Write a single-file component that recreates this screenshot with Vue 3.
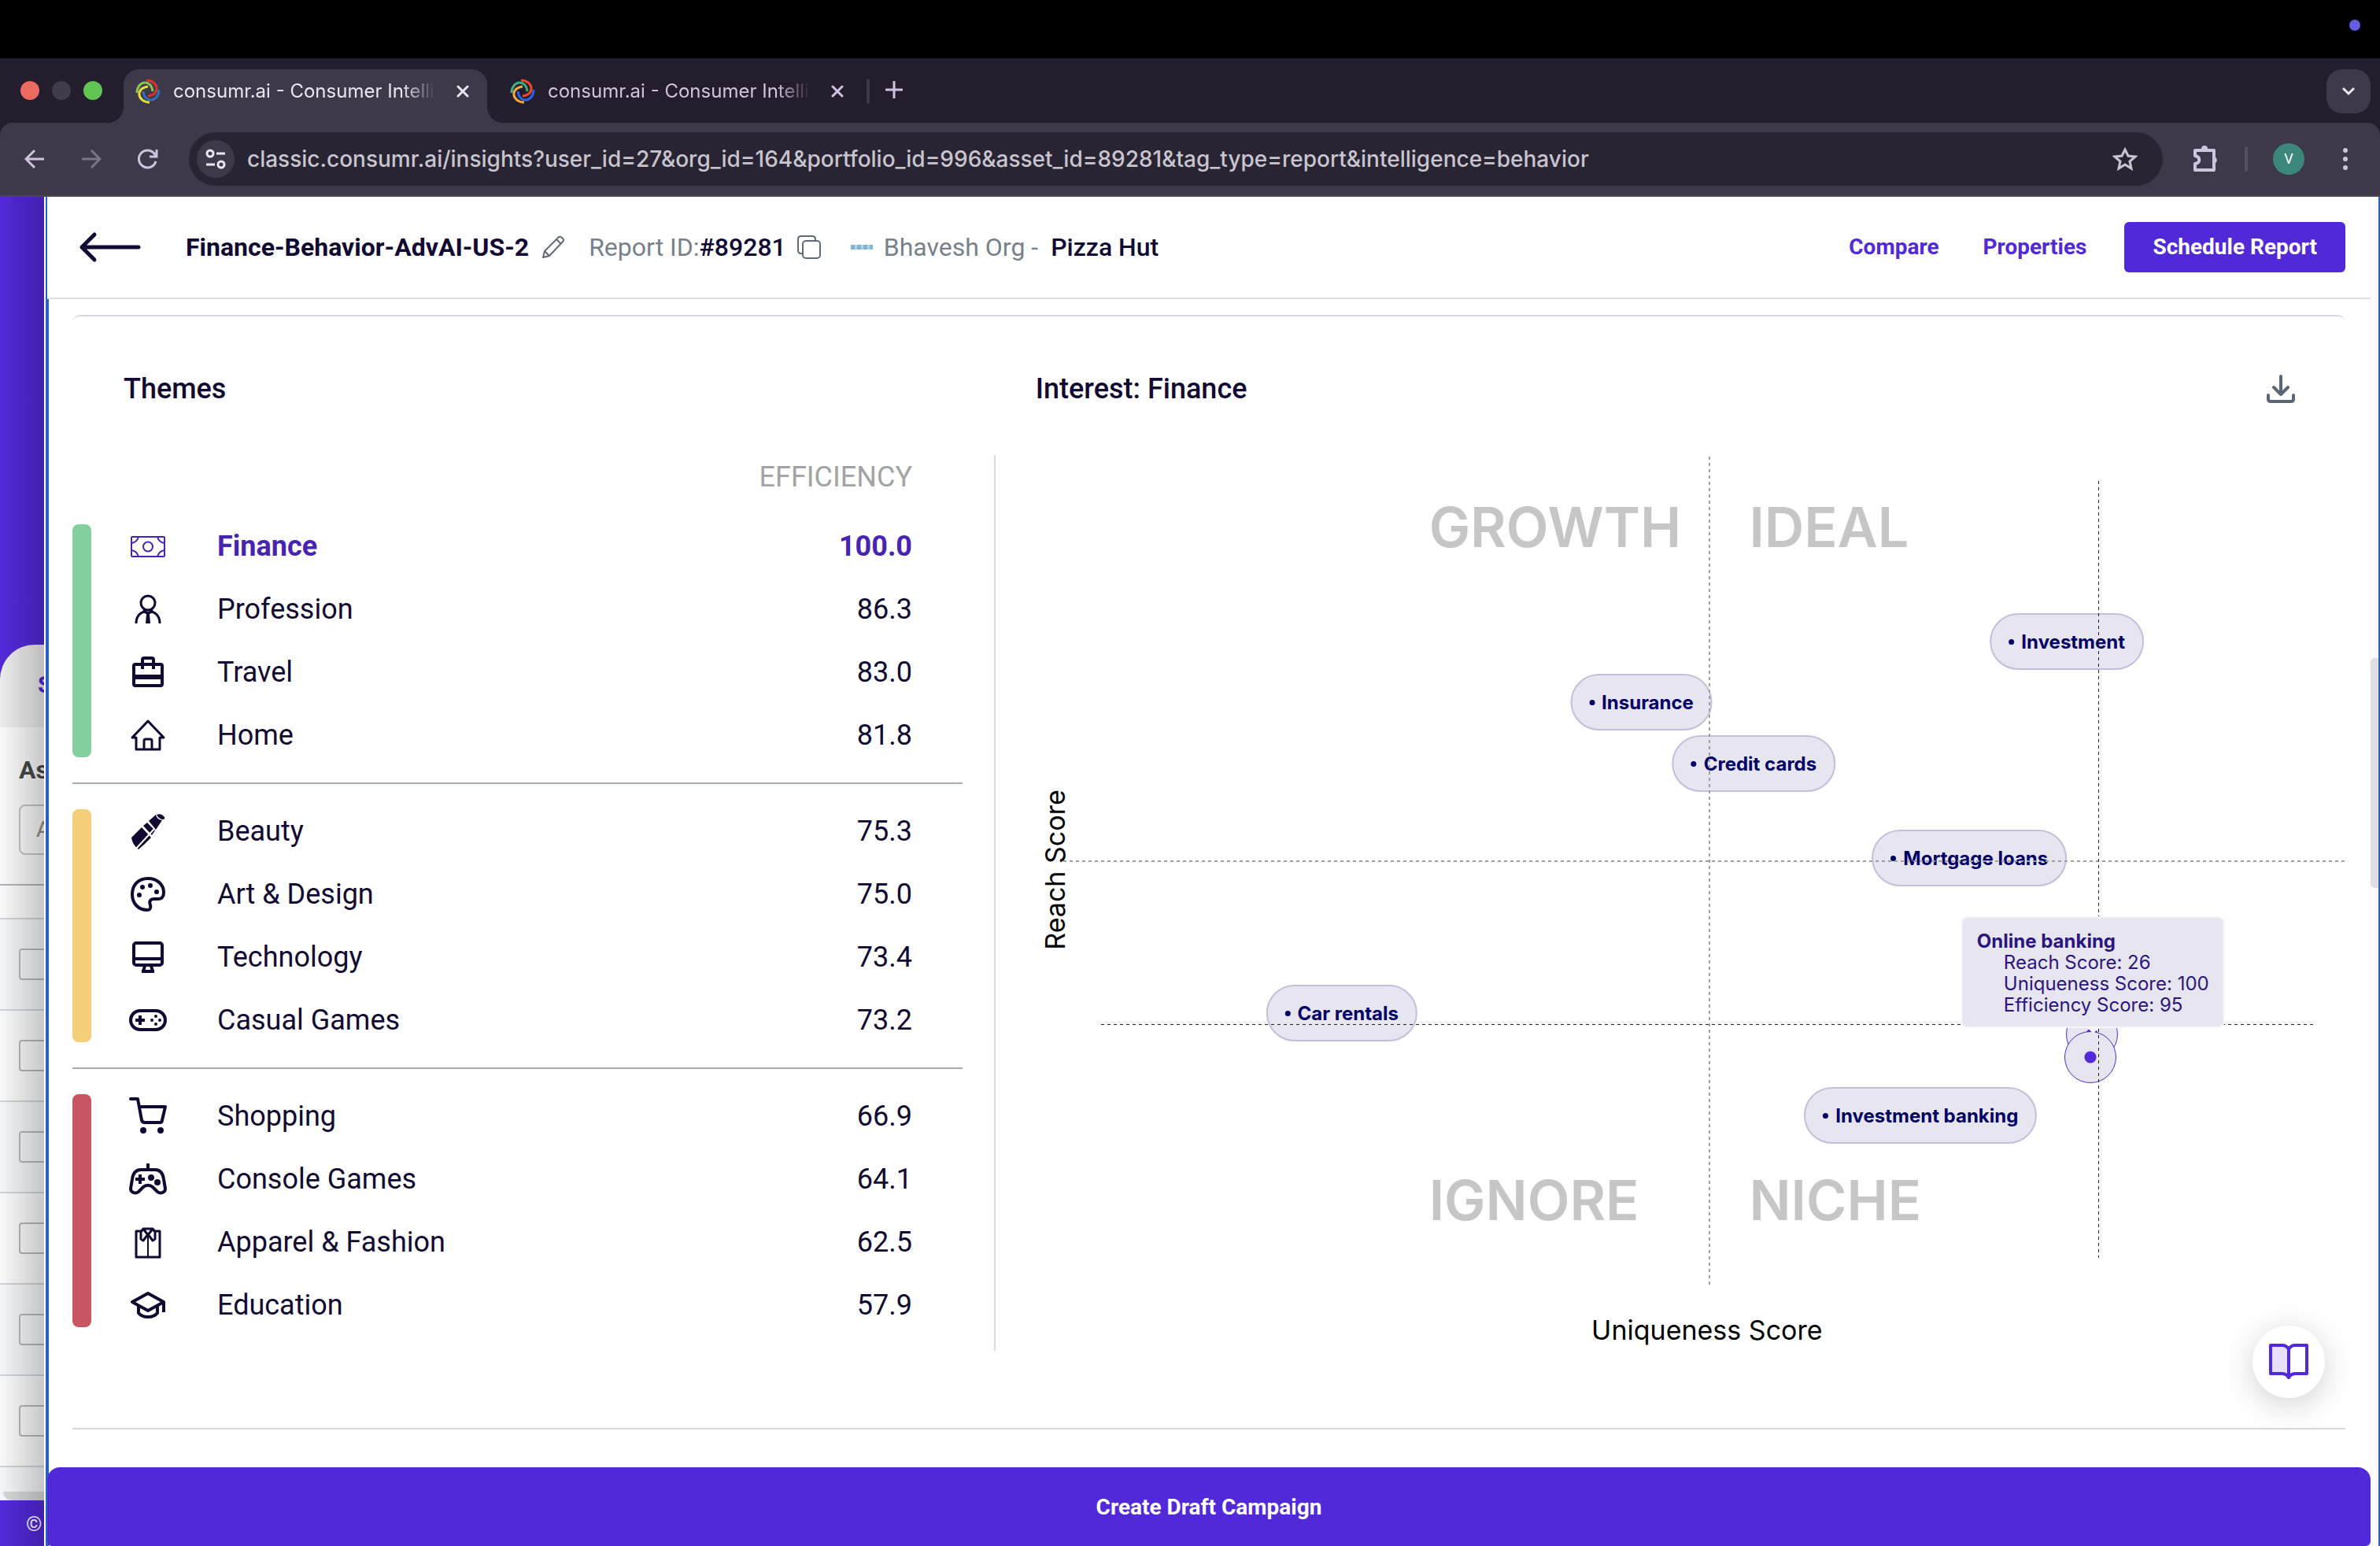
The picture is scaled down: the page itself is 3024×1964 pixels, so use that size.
<script setup>
import { ref } from 'vue'

const url = ref('classic.consumr.ai/insights?user_id=27&org_id=164&portfolio_id=996&asset_id=89281&tag_type=report&intelligence=behavior')

const tabs = [
  { title: 'consumr.ai - Consumer Intelligence', active: true, colors: ['#8cc152', '#d8342c', '#2f6fbd', '#e3df3a'] },
  { title: 'consumr.ai - Consumer Intelligence', active: false, colors: ['#3fae7c', '#ea4a2c', '#2563eb', '#f5a83a'] },
]

const icons = {
  finance: '<g fill="none" stroke="currentColor" stroke-width="2"><rect x="3" y="12" width="42" height="25" rx="1"/><ellipse cx="24" cy="24.500" rx="6" ry="6"/><path d="M12 12q-2 7-9 8M36 12q2 7 9 8M12 37q-2-7-9-8M36 37q2-7 9-8"/></g>',
  profession: '<g fill="none" stroke="currentColor" stroke-width="3"><circle cx="24" cy="16" r="9"/><path d="M9 42c0-9 5-14 11-15M39 42c0-9-5-14-11-15"/></g><path fill="currentColor" d="M18 24l6 3 6-3 1 4-5 2 1 12h-6l1-12-5-2z"/>',
  travel: '<g fill="none" stroke="currentColor" stroke-width="4"><rect x="6" y="14" width="36" height="27" rx="2"/><path d="M17 20V8q0-2 2-2h10q2 0 2 2v12"/></g><path fill="currentColor" d="M5 27h38v6H5z"/>',
  home: '<g fill="none" stroke="currentColor" stroke-width="3" stroke-linejoin="round"><path d="M4 27 24 6l20 21h-5v15H9V27z"/><path d="M19 42V31q0-2 2-2h6q2 0 2 2v11"/></g>',
  beauty: '<path fill="currentColor" d="M3 32 16 19l12 13-8 8-8 7Q4 41 3 32zM18 17l5-4 10 10-4 6zM25 11l9-8q1 6 8 7l-8 12zM35 3q5-2 8 1 4 3 1 5-6 0-9-6z"/><path stroke="#fff" stroke-width="2" d="M9 46 32 21"/>',
  art: '<path fill="none" stroke="currentColor" stroke-width="4" stroke-linejoin="round" d="M24 4C12 4 4 12 4 24s8 20 19 20c4 0 5-3 4-6-2-5 0-8 5-8h5c5 0 7-4 7-8C44 11 35 4 24 4z"/><g fill="currentColor"><circle cx="13" cy="25" r="3"/><circle cx="17" cy="15" r="3"/><circle cx="27" cy="13" r="3"/><circle cx="35" cy="21" r="3"/></g>',
  technology: '<g fill="none" stroke="currentColor" stroke-width="4" stroke-linejoin="round"><rect x="6" y="6" width="36" height="28" rx="3"/><path d="M6 26h36M20 35l-2 7h12l-2-7M16 42h16"/></g>',
  casual: '<rect x="2" y="12" width="44" height="24" rx="12" fill="none" stroke="currentColor" stroke-width="4"/><path stroke="currentColor" stroke-width="4" d="M8 24h12M14 18v12"/><g fill="currentColor"><circle cx="34" cy="19" r="2"/><circle cx="34" cy="29" r="2"/><circle cx="29" cy="24" r="2"/><circle cx="39" cy="24" r="2"/></g>',
  shopping: '<path fill="none" stroke="currentColor" stroke-width="4" stroke-linecap="round" stroke-linejoin="round" d="M2 2h9l5 27q1 3 4 3h19q3 0 3-3l4-17H13"/><circle cx="18" cy="42" r="4" fill="currentColor"/><circle cx="40" cy="42" r="4" fill="currentColor"/>',
  console: '<path fill="none" stroke="currentColor" stroke-width="4" stroke-linejoin="round" d="M15 12h18c7 0 10 5 11 12l2 12c0 5-6 7-10 4l-6-6c-3-3-9-3-12 0l-6 6c-4 3-10 1-10-4l2-12c1-7 4-12 11-12zM24 12V4"/><path stroke="currentColor" stroke-width="4" d="M8 24h12M14 18v12"/><circle cx="28" cy="22" r="4" fill="currentColor"/><circle cx="36" cy="28" r="4" fill="currentColor"/>',
  apparel: '<g fill="none" stroke="currentColor" stroke-width="3" stroke-linejoin="round"><path d="M16 10H9v33h30V10h-7"/><path d="M18 7h12l3 4v9l-3 2-6-8-6 8-3-2v-9zM18 7l6 8 6-8"/><path stroke-width="2" d="M24 15v28"/></g>',
  education: '<g fill="none" stroke="currentColor" stroke-width="4" stroke-linejoin="round"><path d="M4 20 24 9l20 11-20 11z"/><path d="M12 25v9q4 5 12 5t12-5v-9M44 20v13"/></g>',
}

const groups = [
  {
    tone: 'high',
    rows: [
      { name: 'Finance', icon: 'finance', value: '100.0', selected: true },
      { name: 'Profession', icon: 'profession', value: '86.3' },
      { name: 'Travel', icon: 'travel', value: '83.0' },
      { name: 'Home', icon: 'home', value: '81.8' },
    ],
  },
  {
    tone: 'medium',
    rows: [
      { name: 'Beauty', icon: 'beauty', value: '75.3' },
      { name: 'Art & Design', icon: 'art', value: '75.0' },
      { name: 'Technology', icon: 'technology', value: '73.4' },
      { name: 'Casual Games', icon: 'casual', value: '73.2' },
    ],
  },
  {
    tone: 'low',
    rows: [
      { name: 'Shopping', icon: 'shopping', value: '66.9' },
      { name: 'Console Games', icon: 'console', value: '64.1' },
      { name: 'Apparel & Fashion', icon: 'apparel', value: '62.5' },
      { name: 'Education', icon: 'education', value: '57.9' },
    ],
  },
]

/* Chart coordinates, in units of a 1716 x 1138 plot */
const PLOT_W = 1716
const PLOT_H = 1138
const at = (x, y) => ({ left: (x / PLOT_W) * 100 + '%', top: (y / PLOT_H) * 100 + '%' })

const points = [
  { name: 'Investment', x: 1362, y: 237 },
  { name: 'Insurance', x: 821, y: 314 },
  { name: 'Credit cards', x: 964, y: 392 },
  { name: 'Mortgage loans', x: 1238, y: 512 },
  { name: 'Car rentals', x: 440, y: 709 },
  { name: 'Investment banking', x: 1176, y: 839 },
]
const dots = [
  { x: 1394, y: 736 },
  { x: 1392, y: 765 },
]
const quadrants = [
  { name: 'GROWTH', x: 551, y: 92 },
  { name: 'IDEAL', x: 958, y: 92 },
  { name: 'IGNORE', x: 551, y: 947 },
  { name: 'NICHE', x: 958, y: 947 },
]
</script>

<template>
  <div class="screen">
    <div class="menubar"><span class="indicator"></span></div>

    <div class="tabstrip">
      <div class="lights"><i class="red"></i><i class="grey"></i><i class="green"></i></div>
      <div v-for="(tab, i) in tabs" :key="i" class="tab" :class="{ active: tab.active }">
        <svg class="favicon" viewBox="0 0 32 32" fill="none" stroke-width="3">
          <path
            v-for="(color, n) in tab.colors"
            :key="color"
            :stroke="color"
            :transform="`rotate(${n * 90} 16 16)`"
            d="M2 18C2 3 20-1 22 16"
          />
        </svg>
        <span class="tab-title">{{ tab.title }}</span>
        <button class="icon-btn" aria-label="Close tab">
          <svg width="16" height="16" viewBox="0 0 16 16" stroke="currentColor" stroke-width="3" stroke-linecap="round"><path d="M2 2l12 12M14 2 2 14" /></svg>
        </button>
      </div>
      <span class="tab-sep"></span>
      <button class="icon-btn new-tab" aria-label="New tab">
        <svg width="22" height="22" viewBox="0 0 22 22" stroke="currentColor" stroke-width="3" stroke-linecap="round"><path d="M11 1v20M1 11h20" /></svg>
      </button>
      <button class="tab-search" aria-label="Search tabs">
        <svg width="18" height="12" viewBox="0 0 18 12" fill="none" stroke="currentColor" stroke-width="3"><path d="M2 2l7 7 7-7" /></svg>
      </button>
    </div>

    <div class="toolbar-bg">
      <div class="toolbar">
        <div class="nav">
          <button class="icon-btn" aria-label="Back">
            <svg width="26" height="26" viewBox="0 0 26 26" fill="none" stroke="currentColor" stroke-width="3"><path d="M13 2 2 13l11 11M2 13h23" /></svg>
          </button>
          <button class="icon-btn dim" aria-label="Forward">
            <svg width="26" height="26" viewBox="0 0 26 26" fill="none" stroke="currentColor" stroke-width="3"><path d="m13 2 11 11-11 11M24 13H1" /></svg>
          </button>
          <button class="icon-btn" aria-label="Reload">
            <svg width="26" height="26" viewBox="0 0 26 26" fill="none" stroke="currentColor" stroke-width="3"><path d="M23 16A11 11 0 1 1 21 6l3 4M24 1v9h-9" /></svg>
          </button>
        </div>
        <div class="omnibox">
          <button class="site-info" aria-label="Site information">
            <svg width="26" height="26" viewBox="0 0 26 26" fill="none" stroke="currentColor" stroke-width="3"><circle cx="6" cy="6" r="4" /><path d="M14 6h11M1 20h11" /><circle cx="20" cy="20" r="4" /></svg>
          </button>
          <input v-model="url" class="url" type="text" aria-label="Address" />
          <button class="icon-btn star" aria-label="Bookmark">
            <svg width="32" height="32" viewBox="0 0 32 32" fill="none" stroke="currentColor" stroke-width="3"><path d="m16 4 4 8 9 1-7 6 2 9-8-5-8 5 2-9-7-6 9-1z" /></svg>
          </button>
        </div>
        <button class="icon-btn puzzle" aria-label="Extensions">
          <svg width="34" height="36" viewBox="0 0 34 36" fill="none" stroke="currentColor" stroke-width="4" stroke-linejoin="round"><path d="M3 7h24v25H3v-8c7-1 7-9 0-10z" /><path fill="currentColor" stroke="none" d="M11 5a4 4 0 0 1 8 0zM28 15a5 5 0 0 1 0 9z" /></svg>
        </button>
        <span class="bar-sep"></span>
        <button class="avatar">V</button>
        <button class="icon-btn kebab" aria-label="Menu">
          <svg width="8" height="28" viewBox="0 0 8 28" fill="currentColor"><circle cx="4" cy="3" r="3" /><circle cx="4" cy="14" r="3" /><circle cx="4" cy="25" r="3" /></svg>
        </button>
      </div>
    </div>

    <div class="page">
      <aside class="behind">
        <div class="behind-tab"><span>Saved</span></div>
        <div class="behind-card">
          <strong>Asset</strong>
          <div class="behind-input">All</div>
        </div>
        <div class="behind-rows">
          <div class="behind-row head"></div>
          <div v-for="n in 6" :key="n" class="behind-row"><input type="checkbox" :aria-label="'Select asset ' + n" /></div>
          <div class="behind-row last"><span class="behind-scroll"></span></div>
        </div>
        <div class="behind-footer">©</div>
      </aside>

      <section class="panel">
        <header class="header">
          <button class="icon-btn back" aria-label="Back to reports">
            <svg width="80" height="40" viewBox="0 0 80 40" fill="none" stroke="currentColor" stroke-width="5" stroke-linecap="round" stroke-linejoin="round"><path d="M20 4 4 20l16 16M4 20h72" /></svg>
          </button>
          <h1>Finance-Behavior-AdvAI-US-2</h1>
          <button class="icon-btn pencil" aria-label="Rename">
            <svg width="30" height="30" viewBox="0 0 30 30" fill="none" stroke="currentColor" stroke-width="2" stroke-linejoin="round"><path d="m2 28 2-8L22 2q2-1 4 1l1 1q2 2 0 4L10 26zM19 5l6 6M4 20l6 6" /></svg>
          </button>
          <p class="muted">Report ID:<b>#89281</b></p>
          <button class="icon-btn copy" aria-label="Copy report ID">
            <svg width="30" height="30" viewBox="0 0 30 30" fill="none" stroke="currentColor" stroke-width="2"><rect x="7" y="7" width="22" height="22" rx="4" /><path d="M7 23H5q-4 0-4-4V5q0-4 4-4h14q4 0 4 4v2" /></svg>
          </button>
          <span class="org-logo"></span>
          <p class="muted">Bhavesh Org -</p>
          <p class="brand">Pizza Hut</p>
          <nav class="actions">
            <a href="#compare">Compare</a>
            <a href="#properties">Properties</a>
            <button class="primary">Schedule Report</button>
          </nav>
        </header>

        <main class="content">
          <article class="card">
            <div class="card-head">
              <h2 class="themes-title">Themes</h2>
              <h2 class="chart-title">Interest: Finance</h2>
              <button class="icon-btn download" aria-label="Download">
                <svg width="36" height="36" viewBox="0 0 36 36" fill="none" stroke="currentColor" stroke-width="4" stroke-linecap="round" stroke-linejoin="round"><path d="M18 2v22M9 16l9 9 9-9M2 26v5q0 3 3 3h26q3 0 3-3v-5" /></svg>
              </button>
            </div>

            <div class="card-body">
              <div class="themes">
                <table>
                  <thead>
                    <tr><th class="eff" colspan="4">EFFICIENCY</th></tr>
                  </thead>
                  <tbody v-for="(g, gi) in groups" :key="g.tone">
                    <tr v-for="(row, ri) in g.rows" :key="row.name" class="theme" :class="{ selected: row.selected }">
                      <td v-if="ri === 0" rowspan="4" class="tone"><div class="tone-bar" :class="g.tone"></div></td>
                      <td class="icon"><svg width="48" height="48" viewBox="0 0 48 48" v-html="icons[row.icon]"></svg></td>
                      <td class="name">{{ row.name }}</td>
                      <td class="value">{{ row.value }}</td>
                    </tr>
                    <tr v-if="gi < 2"><td colspan="4" class="rule"><hr /></td></tr>
                  </tbody>
                </table>
              </div>

              <div class="chart">
                <span v-for="q in quadrants" :key="q.name" class="quadrant" :style="at(q.x, q.y)">{{ q.name }}</span>
                <span v-for="p in points" :key="p.name" class="pill" :style="at(p.x, p.y)"><i></i>{{ p.name }}</span>
                <span v-for="d in dots" :key="d.y" class="dot" :style="at(d.x, d.y)"></span>
                <span class="line mid-h"></span>
                <span class="line mid-v"></span>
                <span class="line cross-h"></span>
                <span class="line cross-v"></span>
                <span class="axis axis-y">Reach Score</span>
                <span class="axis axis-x">Uniqueness Score</span>
                <div class="tooltip" role="tooltip">
                  <b>Online banking</b>
                  <span>Reach Score: 26</span>
                  <span>Uniqueness Score: 100</span>
                  <span>Efficiency Score: 95</span>
                </div>
              </div>
            </div>
          </article>
        </main>

        <button class="create">Create Draft Campaign</button>
        <span class="scroll-thumb"></span>
        <button class="guide" aria-label="Open guide">
          <svg width="52" height="48" viewBox="0 0 52 48" stroke="#5229d9" stroke-width="4" stroke-linejoin="round"><path fill="#e6e0fa" d="M26 8q-3-5-8-5H3v36h14q6 0 9 5z" /><path fill="none" d="M26 8q3-5 8-5h15v36H35q-6 0-9 5z" /></svg>
        </button>
      </section>
    </div>
  </div>
</template>

<style>
body { margin: 0; }
</style>

<style scoped>
.screen {
  display: flex;
  flex-direction: column;
  min-height: 100vh;
  background: #000;
  color: #120a33;
  font-family: Roboto, "Liberation Sans", sans-serif;
}
.screen *, .screen *::before, .screen *::after { box-sizing: border-box; }
h1, h2, p { margin: 0; }
button { font: inherit; color: inherit; border: 0; cursor: pointer; }
.icon-btn { display: flex; align-items: center; justify-content: center; padding: 0; background: none; }
.icon-btn svg { display: block; }

/* Browser frame */
.menubar { display: flex; justify-content: flex-end; align-items: center; height: 74px; padding: 0 25px 10px; }
.indicator { width: 14px; height: 14px; border-radius: 50%; background: #655ce8; }
.tabstrip {
  display: flex;
  align-items: flex-end;
  height: 82px;
  background: #241d2e;
  color: #cfc4de;
  font: 500 24px/32px Inter, sans-serif;
}
.lights { display: flex; gap: 16px; height: 68px; width: 157px; padding: 15px 0 0 26px; }
.lights i { width: 24px; height: 24px; border-radius: 50%; }
.red { background: #ec6a5e; }
.grey { background: #413b4b; }
.green { background: #61c554; }
.tab { position: relative; display: flex; align-items: center; width: 462px; height: 68px; padding: 0 23px 12px 15px; }
.tab + .tab { width: 476px; padding-left: 29px; }
.tab.active { background: #3e394a; color: #e9e6ee; border-radius: 20px 20px 0 0; }
.tab.active::before, .tab.active::after {
  content: "";
  position: absolute;
  bottom: 0;
  width: 20px;
  height: 20px;
}
.tab.active::before { left: -20px; background: radial-gradient(circle at 0 0, transparent 20px, #3e394a 20px); }
.tab.active::after { right: -20px; background: radial-gradient(circle at 100% 0, transparent 20px, #3e394a 20px); }
.favicon { width: 32px; height: 32px; }
.tab-title {
  flex: 1;
  min-width: 0;
  margin: 0 26px 0 16px;
  overflow: hidden;
  white-space: nowrap;
  font-weight: 400;
  -webkit-mask-image: linear-gradient(to right, #000 87%, transparent);
  mask-image: linear-gradient(to right, #000 87%, transparent);
}
.tab-sep { width: 4px; height: 32px; margin: 0 20px 24px 6px; background: #3e394a; border-radius: 2px; }
.new-tab { height: 32px; margin-bottom: 26px; }
.tab-search {
  display: flex;
  align-items: center;
  justify-content: center;
  width: 56px;
  height: 56px;
  margin: 0 12px 12px auto;
  padding: 0;
  border-radius: 20px;
  background: #3e394a;
  color: #e9e6ee;
}
.toolbar-bg { background: #241d2e; }
.toolbar {
  display: flex;
  align-items: center;
  height: 94px;
  padding: 0 40px 0 31px;
  border-bottom: 2px solid #4a474e;
  border-radius: 16px 16px 0 0;
  background: #3e394a;
  color: #cfc4de;
}
.nav { display: flex; gap: 46px; margin-right: 39px; }
.dim { color: #7b7486; }
.omnibox { display: flex; align-items: center; flex: 1; height: 68px; padding: 0 32px 0 10px; border-radius: 34px; background: #282433; }
.site-info { display: flex; align-items: center; justify-content: center; width: 48px; height: 48px; padding: 0; border-radius: 50%; background: #3e394a; color: #e9e6ee; }
.url { flex: 1; min-width: 0; margin: 0 16px; padding: 0; border: 0; outline: 0; background: none; color: #c9c5ce; font: 500 28px/36px Inter, sans-serif; }
.star { color: #c9c5ce; }
.puzzle { margin-left: 38px; }
.bar-sep { width: 4px; height: 32px; margin: 0 32px; border-radius: 2px; background: #554f60; }
.avatar { width: 40px; height: 40px; padding: 0; border-radius: 50%; background: #3b877b; color: #fff; font-size: 18px; line-height: 40px; }
.kebab { margin-left: 48px; }

/* Page hidden behind the panel */
.page { display: flex; flex: 1; background: #fff; }
.behind { position: relative; display: flex; flex-direction: column; width: 56px; margin-right: 2px; overflow: hidden; background: #5229d9; }
.behind::after { content: ""; position: absolute; inset: 0; background: linear-gradient(to right, transparent, rgba(0, 0, 0, 0.2)); }
.behind-tab { height: 105px; margin-top: 569px; padding: 33px 0 0 48px; border-radius: 44px 0 0 0; background: #ececec; color: #5229d9; font-size: 30px; font-weight: 700; }
.behind-card { height: 201px; padding: 34px 0 0 24px; border-bottom: 2px solid #b0b4b8; background: #fafafa; color: #484848; font-size: 32px; line-height: 40px; }
.behind-input { width: 400px; height: 64px; margin-top: 24px; padding: 10px 20px; border: 2px solid #c4c4c4; border-radius: 8px; color: #8c8c8c; font-size: 28px; }
.behind-row { display: flex; align-items: center; height: 116px; padding-left: 24px; border-bottom: 2px solid #d0d4d8; background: #fafafa; }
.behind-row:nth-child(even) { background: #f4f6f9; }
.behind-row.head { height: 43px; }
.behind-row.last { height: 42px; padding: 30px 0 0 4px; border: 0; }
.behind-row input { flex: none; appearance: none; width: 40px; height: 40px; margin: 0; border: 2px solid #b8b8b8; border-radius: 4px; }
.behind-scroll { width: 52px; height: 11px; border-radius: 0 0 0 11px; background: #d8d8d8; }
.behind-footer { flex: 1; padding: 14px 0 0 33px; color: #fff; font-size: 26px; line-height: 32px; }

/* Report panel */
.panel { position: relative; display: flex; flex: 1; flex-direction: column; min-width: 0; border-left: 4px solid #2a5fc9; border-right: 2px solid #2a5fc9; background: #fff; }
.header {
  display: flex;
  align-items: center;
  height: 130px;
  margin: 0 10px 0 -2px;
  padding: 0 32px 0 40px;
  border-bottom: 2px solid #dededf;
  background: #fff;
  font-size: 32px;
  line-height: 40px;
}
.header h1 { margin-left: 56px; font-size: 32px; font-weight: 700; }
.pencil { margin: 0 30px 0 16px; color: #5f6b78; }
.muted { color: #77818c; }
.muted b { color: #120a33; font-weight: 500; }
.copy { margin: 0 38px 0 14px; color: #5f6b78; }
.org-logo { width: 28px; height: 6px; margin-right: 14px; background: repeating-linear-gradient(to right, #7fb4d8 0 5px, #b9d3dc 5px 8px); }
.brand { margin-left: 16px; font-weight: 500; }
.actions { display: flex; align-items: center; gap: 56px; margin-left: auto; font-size: 28px; font-weight: 700; color: #5229d9; }
.actions a { color: inherit; text-decoration: none; }
.primary { height: 64px; margin-left: -8px; padding: 0 36px; border-radius: 6px; background: #5229d9; color: #fff; }
.content { flex: 1; padding: 20px 42px 0 30px; }
.card { padding-bottom: 98px; border: solid #d6d6dc; border-width: 2px 0; border-radius: 10px 10px 0 0; }
.card-head { display: flex; align-items: center; height: 176px; padding: 8px 64px 0 65px; }
.card-head h2 { font-size: 36px; font-weight: 500; line-height: 44px; }
.themes-title { width: 42%; }
.download { margin-left: auto; color: #5a6672; }
.card-body { display: grid; grid-template-columns: 1173fr 1715fr; }
.themes { padding: 0 40px 18px 0; border-right: 2px solid #dcdcde; }
table { width: 100%; border-collapse: collapse; font-size: 36px; line-height: 44px; }
th, td { padding: 0; }
.eff { height: 76px; padding: 0 64px 20px 0; color: #a3a3a3; font-weight: 400; text-align: right; }
.theme { height: 80px; }
.tone { width: 72px; }
.tone-bar { width: 24px; height: 296px; border-radius: 8px; }
.high { background: #82d09e; }
.medium { background: #f4ce79; }
.low { background: #c85562; }
.icon { width: 112px; }
.icon svg { display: block; overflow: visible; }
.value { padding-right: 64px; text-align: right; }
.selected { color: #4724b4; font-weight: 700; }
.rule { height: 42px; }
.rule hr { height: 2px; margin: 0; border: 0; background: #a8adb5; }

/* Quadrant chart */
.chart { position: relative; font-family: Inter, "Liberation Sans", sans-serif; }
.quadrant { position: absolute; transform: translateY(-50%); color: #c6c6c6; font-size: 70px; font-weight: 600; line-height: 80px; }
.pill {
  position: absolute;
  display: flex;
  align-items: center;
  gap: 9px;
  height: 72px;
  padding: 0 22px;
  border: 2px solid #c3bfdb;
  border-radius: 36px;
  background: #e7e5ef;
  color: #000066;
  font-size: 24px;
  font-weight: 700;
  white-space: nowrap;
  transform: translate(-50%, -50%);
}
.pill i { width: 7px; height: 7px; border-radius: 50%; background: #000066; }
.dot { position: absolute; width: 66px; height: 66px; border: 1px solid #5229d9; border-radius: 50%; background: radial-gradient(circle, #5229d9 7px, #e7e5ef 8px); transform: translate(-50%, -50%); }
.line { position: absolute; }
.mid-h { top: 515px; left: 5%; right: 0; height: 2px; background: repeating-linear-gradient(to right, #a0a0a0 0 4px, transparent 4px 8px); }
.mid-v { left: 52.8%; top: 2px; bottom: 84px; width: 2px; background: repeating-linear-gradient(to bottom, #a0a0a0 0 4px, transparent 4px 8px); }
.cross-h { top: 723px; left: 7.8%; right: 40px; height: 1px; background: repeating-linear-gradient(to right, #222 0 4px, transparent 4px 8px); }
.cross-v { left: 81.7%; top: 33px; bottom: 118px; width: 1px; background: repeating-linear-gradient(to bottom, #222 0 4px, transparent 4px 8px); }
.axis { position: absolute; color: #000; font-size: 34px; line-height: 44px; white-space: nowrap; }
.axis-x { left: 52.7%; bottom: 4px; transform: translateX(-50%); }
.axis-y { left: 76px; top: 527px; transform: translate(-50%, -50%) rotate(-90deg); }
.tooltip {
  position: absolute;
  left: 81.3%;
  top: 586px;
  display: flex;
  flex-direction: column;
  padding: 16px 18px 14px;
  border: 2px solid #f6f5fa;
  border-radius: 8px;
  background: #e7e5ef;
  color: #2b1580;
  font-size: 24px;
  line-height: 27px;
  white-space: nowrap;
  transform: translateX(-50%);
}
.tooltip span { padding-left: 34px; }
.tooltip::after { content: ""; position: absolute; left: 50%; top: 100%; margin-left: -9px; border: 9px solid transparent; border-top-color: #f6f5fa; border-bottom: 0; }

.create { height: 100px; margin: 0 10px 0 -2px; border-radius: 16px 16px 6px 6px; background: #5229d9; color: #fff; font-size: 28px; font-weight: 700; }
.scroll-thumb { position: absolute; right: 0; top: 586px; width: 10px; height: 292px; border-radius: 5px 0 0 5px; background: #dfdfe1; }
.guide {
  position: absolute;
  right: 68px;
  bottom: 188px;
  display: flex;
  align-items: center;
  justify-content: center;
  width: 92px;
  height: 92px;
  padding: 0;
  border-radius: 50%;
  background: #fff;
  box-shadow: 0 8px 40px rgba(0, 0, 0, 0.18);
}
</style>
